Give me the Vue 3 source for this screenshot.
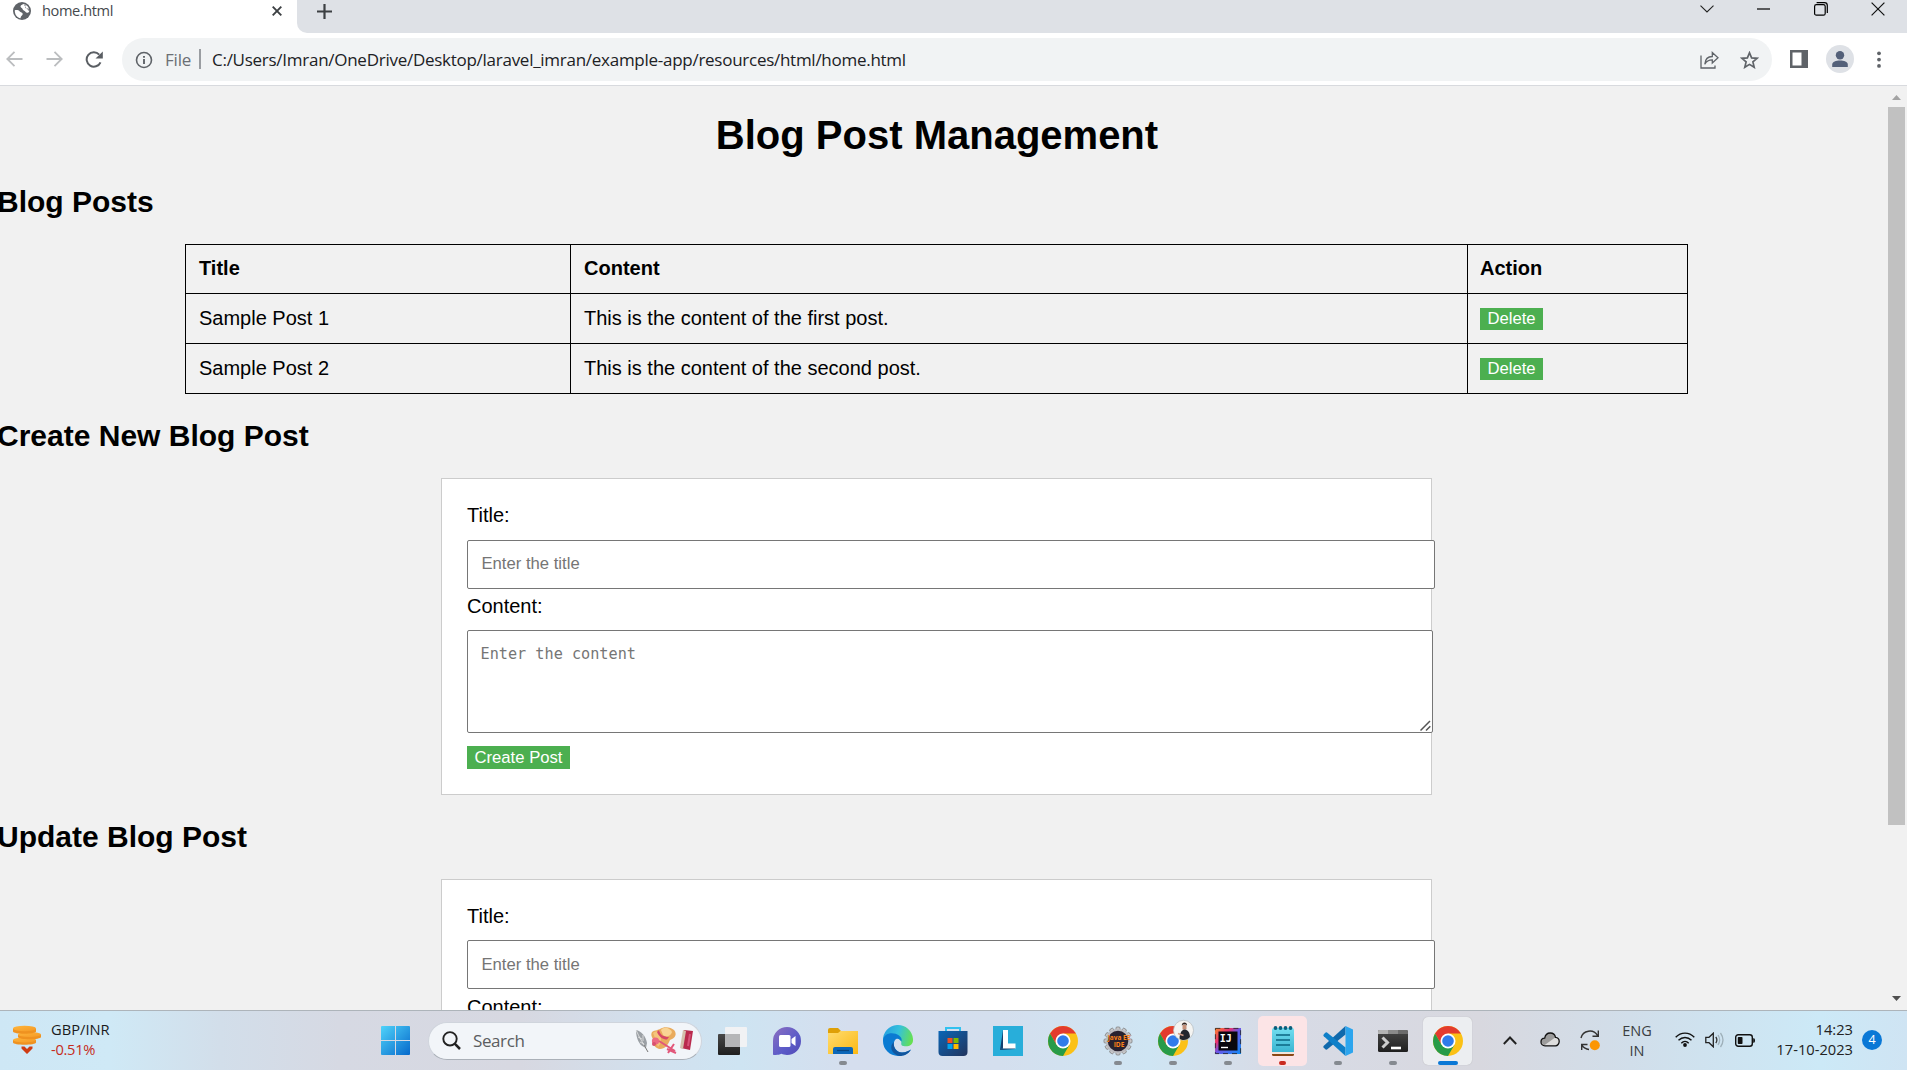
<script setup>
const posts = [
  { title: 'Sample Post 1', content: 'This is the content of the first post.' },
  { title: 'Sample Post 2', content: 'This is the content of the second post.' },
]
const forms = [
  { heading: 'Create New Blog Post', button: 'Create Post', cls: 'create' },
  { heading: 'Update Blog Post', button: 'Update Post', cls: 'update' },
]
const apps = [
  { id: 'taskview' },
  { id: 'chat' },
  { id: 'folder', run: true },
  { id: 'edge' },
  { id: 'store' },
  { id: 'lapp' },
  { id: 'chrome' },
  { id: 'eclipse', run: true },
  { id: 'chromeuser', run: true },
  { id: 'idea', run: true },
  { id: 'notepad', run: true, alert: true },
  { id: 'code', run: true },
  { id: 'terminal', run: true },
  { id: 'chromeactive', active: true },
]
const gearTeeth = Array.from({ length: 12 }, (_, i) => i * 30)
</script>

<template>
  <div class="screen">
    <div class="tabstrip">
      <div class="tab">
        <svg class="globe" width="18" height="18" viewBox="0 0 18 18">
          <circle cx="9" cy="9" r="9" fill="#5f6368" />
          <path d="M1.8 8.2C3.6 8 5.8 8 6.8 9.4 7.4 10.3 9.8 10.2 9.7 12 9.6 13.8 7.7 13.6 7.6 16.3 3.8 15.6 1.6 12.2 1.8 8.2Z" fill="#fff" />
          <path d="M10.2 2.1C8.6 3 7.2 3.8 7.6 5 8 6.1 9.3 5.6 9.5 7 9.7 8.3 11.8 8.7 12.4 9.8 13 11 15.6 11 16.2 9.4 16.4 5.4 13.6 2.4 10.2 2.1Z" fill="#fff" />
          <path d="M10.6 2.6C12.8 2.6 13.3 4 12.2 5 11.6 5.6 12.8 7 14.2 6.4 15.5 5.9 16.4 7 16.2 9.4" fill="#5f6368" opacity=".75" />
        </svg>
        <span class="tabtitle">home.html</span>
        <svg class="tabclose" width="10" height="10" viewBox="0 0 10 10"><path d="M.7.7 9.3 9.3M9.3.7.7 9.3" stroke="#3c4043" stroke-width="1.9" /></svg>
      </div>
      <div class="striprest">
        <svg class="plus" width="15" height="15" viewBox="0 0 15 15"><path d="M7.5 0V15M0 7.5H15" stroke="#3c4043" stroke-width="2.2" /></svg>
        <div class="winctl">
          <svg width="14" height="8" viewBox="0 0 14 8"><path d="M.5.7 7 7 13.500 .7" fill="none" stroke="#222" stroke-width="1.1" /></svg>
          <svg width="14" height="2" viewBox="0 0 14 2"><path d="M0 1H13" stroke="#000" stroke-width="1.2" /></svg>
          <svg width="14" height="14" viewBox="0 0 14 14"><rect x=".6" y="2.600" width="10.600" height="10.600" rx="1.800" fill="none" stroke="#000" stroke-width="1.200" /><path d="M2.600 .7H10.500Q13.300 .7 13.300 3.500V11" fill="none" stroke="#000" stroke-width="1.200" /></svg>
          <svg width="14" height="14" viewBox="0 0 14 14"><path d="M.6.6 13.400 13.400M13.400 .6.600 13.400" stroke="#111" stroke-width="1.200" /></svg>
        </div>
      </div>
    </div>

    <div class="toolbar">
      <svg class="back" width="17" height="16" viewBox="0 0 17 16"><path d="M16.500 8H1.500M8.500 .8 1.300 8 8.500 15.200" fill="none" stroke="#bbbdbf" stroke-width="1.800" /></svg>
      <svg class="fwd" width="17" height="16" viewBox="0 0 17 16"><path d="M.5 8H15.500M8.500 .8 15.700 8 8.500 15.200" fill="none" stroke="#bbbdbf" stroke-width="1.800" /></svg>
      <svg class="reload" width="18" height="17" viewBox="0 0 18 17"><path d="M15.500 11.300A7.200 7.200 0 1 1 14.200 3.600" fill="none" stroke="#5a5e63" stroke-width="2" /><path d="M17.800 .6V7.600H10.500Z" fill="#5a5e63" /></svg>
      <div class="omnibox">
        <svg class="info" width="18" height="18" viewBox="0 0 18 18"><circle cx="9" cy="9" r="7.500" fill="none" stroke="#5f6368" stroke-width="1.600" /><path d="M9 8V13M9 5V6.800" stroke="#5f6368" stroke-width="1.900" /></svg>
        <span class="scheme">File</span>
        <i class="sep"></i>
        <span class="url">C:/Users/Imran/OneDrive/Desktop/laravel_imran/example-app/resources/html/home.html</span>
        <svg class="share" width="19" height="18" viewBox="0 0 19 18"><path d="M1 4.500V17H15V14.500M4.800 13.200C5.200 8.500 8 5.500 12.300 5.500V1.500L18 6.800 12.300 12V8.900C8.500 8.900 6.300 10.200 4.800 13.200Z" fill="none" stroke="#5f6368" stroke-width="1.300" /></svg>
        <svg class="star" width="19" height="18" viewBox="0 0 19 18"><path d="M9.500 1.800 11.600 6.900 17.100 7.300 12.900 10.900 14.200 16.300 9.500 13.400 4.800 16.300 6.100 10.900 1.900 7.300 7.400 6.900Z" fill="none" stroke="#5f6368" stroke-width="1.700" /></svg>
      </div>
      <svg class="panel" width="18" height="18" viewBox="0 0 18 18"><path fill-rule="evenodd" d="M0 0H18V18H0ZM2.500 2.500V15.500H11.500V2.500Z" fill="#5f6368" /></svg>
      <svg class="person" width="28" height="28" viewBox="0 0 28 28"><circle cx="14" cy="14" r="14" fill="#dee1e6" /><circle cx="14" cy="10.200" r="4.200" fill="#536079" /><path d="M6.200 22V19.500C6.200 16.700 10 15.500 14 15.500S21.800 16.700 21.800 19.500V22Z" fill="#536079" /></svg>
      <svg class="dots" width="4" height="17" viewBox="0 0 4 17"><g fill="#5f6368"><circle cx="2" cy="2.300" r="1.900" /><circle cx="2" cy="8.600" r="1.900" /><circle cx="2" cy="14.900" r="1.900" /></g></svg>
    </div>

    <div class="viewport">
      <main class="page">
        <h1>Blog Post Management</h1>
        <h2>Blog Posts</h2>
        <table>
          <colgroup><col class="c1" /><col class="c2" /><col class="c3" /></colgroup>
          <thead>
            <tr><th>Title</th><th>Content</th><th>Action</th></tr>
          </thead>
          <tbody>
            <tr v-for="p in posts" :key="p.title">
              <td>{{ p.title }}</td>
              <td>{{ p.content }}</td>
              <td><button class="btn del">Delete</button></td>
            </tr>
          </tbody>
        </table>
        <template v-for="f in forms" :key="f.heading">
          <h2>{{ f.heading }}</h2>
          <form :class="f.cls" @submit.prevent>
            <label>Title:</label>
            <input type="text" placeholder="Enter the title" />
            <label>Content:</label>
            <div class="area">
              <textarea placeholder="Enter the content"></textarea>
              <svg class="grip" width="11" height="11" viewBox="0 0 11 11"><path d="M.5 10.500 10 1M6 10.500 10.300 6.200" stroke="#555" stroke-width="1.500" /></svg>
            </div>
            <button class="btn">{{ f.button }}</button>
          </form>
        </template>
      </main>
      <div class="scrollbar">
        <svg width="9" height="5" viewBox="0 0 9 5"><path d="M0 5 4.500 0 9 5Z" fill="#a3a3a3" /></svg>
        <div class="thumb"></div>
        <svg class="down" width="9" height="5" viewBox="0 0 9 5"><path d="M0 0H9L4.500 5Z" fill="#505050" /></svg>
      </div>
    </div>

    <div class="taskbar">
      <svg width="0" height="0" class="defs">
        <defs>
          <linearGradient id="gWin" x1="0" y1="0" x2="1" y2="1"><stop offset="0" stop-color="#4fd3fa" /><stop offset="1" stop-color="#0669cb" /></linearGradient>
          <linearGradient id="gCoin" x1="0" y1="0" x2="1" y2="1"><stop offset="0" stop-color="#ffb53b" /><stop offset="1" stop-color="#f49a26" /></linearGradient>
          <linearGradient id="gDark" x1="0" y1="0" x2="0" y2="1"><stop offset="0" stop-color="#484848" /><stop offset="1" stop-color="#1f1f1f" /></linearGradient>
          <linearGradient id="gChat" x1="0" y1="0" x2="1" y2="1"><stop offset="0" stop-color="#8d6fc0" /><stop offset=".6" stop-color="#5b5bc8" /><stop offset="1" stop-color="#5149b5" /></linearGradient>
          <linearGradient id="gFold" x1="0" y1="0" x2="1" y2="1"><stop offset="0" stop-color="#ffdc70" /><stop offset="1" stop-color="#fbb813" /></linearGradient>
          <linearGradient id="gEdge" x1="0" y1=".3" x2="1" y2=".5"><stop offset="0" stop-color="#259fe0" /><stop offset=".5" stop-color="#35c1dc" /><stop offset="1" stop-color="#66e052" /></linearGradient>
          <linearGradient id="gStore" x1="0" y1="0" x2="1" y2="1"><stop offset="0" stop-color="#0b66b6" /><stop offset="1" stop-color="#22345d" /></linearGradient>
          <linearGradient id="gIj" x1="0" y1="0" x2="1" y2="1"><stop offset="0" stop-color="#f98a2b" /><stop offset=".3" stop-color="#e8326e" /><stop offset=".5" stop-color="#6b57e8" /><stop offset="1" stop-color="#0d8cf5" /></linearGradient>
          <linearGradient id="gNote" x1="0" y1="0" x2="0" y2="1"><stop offset="0" stop-color="#72def0" /><stop offset="1" stop-color="#39b3d0" /></linearGradient>
          <symbol id="chromeLogo" viewBox="0 0 30 30">
            <circle cx="15" cy="15" r="15" fill="#fbc116" />
            <path d="M2.010 7.500A15 15 0 0 1 27.990 7.500H15L8.505 18.750Z" fill="#e33b2e" />
            <path d="M2.010 7.500A15 15 0 0 0 15 30L21.495 18.750H8.505Z" fill="#279b48" />
            <circle cx="15" cy="15" r="7.500" fill="#fff" />
            <circle cx="15" cy="15" r="5.800" fill="#2f7bea" />
          </symbol>
        </defs>
      </svg>

      <svg class="coins" width="29" height="30" viewBox="0 0 29 30">
        <path d="M0 15V17.500C0 20.500 23 20.500 23 17.500V15Z" fill="#ef9220" /><ellipse cx="11.500" cy="15" rx="11.500" ry="2.500" fill="url(#gCoin)" />
        <path d="M5 9.500V12C5 15 28 15 28 12V9.500Z" fill="#ef9220" /><ellipse cx="16.500" cy="9.500" rx="11.500" ry="2.500" fill="url(#gCoin)" />
        <path d="M0 3.500V6.500C0 9.500 23 9.500 23 6.500V3.500Z" fill="#ef9220" /><ellipse cx="11.500" cy="3.500" rx="11.500" ry="2.700" fill="url(#gCoin)" />
        <path d="M8.500 21.500H11.500L14 24 16.500 21.500H19.500V23.500L14 29 8.500 23.500Z" fill="#cf3b12" />
      </svg>
      <div class="rate"><span>GBP/INR</span><span class="neg">-0.51%</span></div>

      <svg class="winlogo" width="29" height="29" viewBox="0 0 29 29"><path d="M1 0H14V14H0V1Q0 0 1 0ZM15 0H28Q29 0 29 1V14H15ZM0 15H14V29H1Q0 29 0 28ZM15 15H29V28Q29 29 28 29H15Z" fill="url(#gWin)" /></svg>

      <div class="search">
        <svg class="mag" width="19" height="19" viewBox="0 0 19 19"><circle cx="8" cy="7.800" r="6.700" fill="none" stroke="#222" stroke-width="1.900" /><path d="M12.700 12.700 18 18" stroke="#222" stroke-width="2.500" /></svg>
        <span>Search</span>
        <svg class="art" width="60" height="28" viewBox="0 0 60 28">
          <path d="M1 3C6 4 11 9 12 16L11 21 9 20C4 18 1 11 1 3Z" fill="#9ba0a5" /><path d="M1 3C4 10 8 16 13 25M3 10 7 12M5 15 9 17M8 8 8 14" fill="none" stroke="#e8e8e8" stroke-width=".8" /><path d="M9 18 13 25" stroke="#777" />
          <path d="M17 5C20 3 24 3 25 2 29 -1 36 0 39 3 43 8 39 12 35 13 33 18 30 22 25 22 20 21 17 17 18 12 16 9 16 7 17 5Z" fill="#e9ab5d" /><path d="M26 3C29 -1 35 1 37 5 36 9 31 11 28 8Z" fill="#f9d494" /><path d="M18 6C21 4 24 4 25 7 27 12 26 17 23 20 21 16 20 10 18 6Z" fill="#f4c47c" /><path d="M24 3C25 8 29 10 34 10L32 12.500C28 12.500 24 10 22 5Z" fill="#d64766" />
          <circle cx="20.500" cy="14" r="3.600" fill="#ec6a84" /><circle cx="19" cy="17" r="2" fill="#d8506e" /><path d="M24 14 40 24M39 17 33 26M32 22 41 26" fill="none" stroke="#e2577a" stroke-width="2" />
          <path d="M49 3 58 4 55 23 46 21Z" fill="#b92a4d" /><path d="M48 3 51 4 48 22 45 21Z" fill="#d4c0ac" /><path d="M55 7 53 19" stroke="#d8537a" stroke-width="2" />
        </svg>
      </div>

      <div class="apps">
        <div v-for="a in apps" :key="a.id" class="slot" :class="{ active: a.active, alert: a.alert }">
          <svg width="50" height="50" viewBox="0 0 50 50">
            <g v-if="a.id === 'taskview'"><rect x="10" y="18" width="22" height="21" rx="1" fill="url(#gDark)" /><rect x="17" y="11" width="22" height="20" rx="1" fill="#f1f2f4" /><path d="M17 18H32V31H17Z" fill="#b5b6b8" /></g>
            <g v-else-if="a.id === 'chat'" transform="translate(-1 0)"><path d="M11 38.800V25A14 14 0 1 1 25 39C22.500 39 21 38.500 19.500 37.800 17 39 14 39.200 11 38.800Z" fill="url(#gChat)" /><rect x="17" y="19" width="11.500" height="12" rx="1.500" fill="#fff" /><path d="M29.500 23 33.500 20V30L29.500 27Z" fill="#fff" /></g>
            <g v-else-if="a.id === 'folder'"><path d="M10 14Q10 12 12 12H20L23 15V22H10Z" fill="#dfa007" /><path d="M10 17H20L22.500 15H40V38H10Z" fill="url(#gFold)" /><path d="M15 38V33Q15 31 17 31H33Q35 31 35 33V38Z" fill="#0c67b9" /><path d="M19 34.500H31" stroke="#09457f" stroke-width="1.200" /></g>
            <g v-else-if="a.id === 'edge'"><path d="M10 25A15 15 0 0 1 40 23C40.500 29 36 30.500 32 30.200 27 30 28.500 27.500 28.300 25.500L20 18Z" fill="url(#gEdge)" /><path d="M10 25C10 17 20 15 26 19.500 29 22 29 24 28.300 25.500 27.500 23 24 21.500 22 24 18.500 29 23 36.500 29 36.500 33 36.500 36 34.500 38 33.500 35.500 38 30.500 40 25 40A15 15 0 0 1 10 25Z" fill="#0b7bd2" /><path d="M20.800 26C20 32 24 37 29.500 36.500 33 36.400 36 34.500 38 33.500 35.500 38 31 40 26.500 40 18 38 16 30 20.800 26Z" fill="#12559d" /></g>
            <g v-else-if="a.id === 'store'"><path d="M18 17V12H32V17" fill="none" stroke="#32c1ef" stroke-width="2" /><path d="M10.500 15H39.500V36Q39.500 40 35.500 40H14.500Q10.500 40 10.500 36Z" fill="url(#gStore)" /><path d="M19.500 22H24.500V27H19.500Z" fill="#f25022" /><path d="M25.500 22H30.500V27H25.500Z" fill="#7fba00" /><path d="M19.500 28H24.500V33H19.500Z" fill="#00a4ef" /><path d="M25.500 28H30.500V33H25.500Z" fill="#ffb900" /></g>
            <g v-else-if="a.id === 'lapp'"><path d="M10 10H40V40H10Z" fill="#28aeda" /><path d="M20 14 17 34 20 32Z M17 34 20 31.500H32V33Z" fill="#15406f" /><path d="M20 14H25V27.500H32.500V32.500H20Z" fill="#fff" /></g>
            <g v-else-if="a.id === 'chrome' || a.id === 'chromeactive'"><use href="#chromeLogo" x="10" y="10" width="30" height="30" /></g>
            <g v-else-if="a.id === 'eclipse'"><rect v-for="t in gearTeeth" :key="t" x="23" y="11" width="4" height="5" rx="1" fill="#c9c9cb" stroke="#777" stroke-width=".7" :transform="`rotate(${t} 25 25)`" /><circle cx="25" cy="25" r="11.300" fill="#29222f" stroke="#bcbcc0" stroke-width="2" /><text x="26" y="24" class="eclText">Java EE</text><text x="26" y="30.500" class="eclText">IDE</text></g>
            <g v-else-if="a.id === 'chromeuser'"><use href="#chromeLogo" x="10" y="10" width="30" height="30" /><circle cx="35.500" cy="14.300" r="10" fill="#f4f4f2" stroke="#b5babd" stroke-width=".7" /><path d="M34.500 9H38.500V13.500H34.500Z" fill="#c59078" /><path d="M33.800 9.500C33.500 5.500 39.500 5.500 39 9.500L38 8.500H35Z" fill="#33241f" /><path d="M31.500 22.500C31.800 18 33 14.500 36 13.500 39.500 13.500 41.500 15.500 42 21 39 24.500 34.500 25 31.500 22.500Z" fill="#23262d" /><path d="M30 17.500 35.500 19.500" stroke="#d19b85" stroke-width="1.500" /></g>
            <g v-else-if="a.id === 'idea'"><path d="M12 12H38V38H12Z" fill="url(#gIj)" /><path d="M12.400 12.400H37.600V37.600H12.400Z" fill="none" stroke="#222" stroke-width=".8" stroke-dasharray="5 4" /><path d="M15.500 15.500H34.500V34.500H15.500Z" fill="#09070e" /><text x="16.800" y="25.500" class="ijText">IJ</text><path d="M18 31.500H25" stroke="#fff" stroke-width="1.400" /></g>
            <g v-else-if="a.id === 'notepad'"><path d="M14 34H36V38.500Q36 40 34.500 40H15.500Q14 40 14 38.500Z" fill="#8a4714" /><path d="M14 14Q14 12 16 12H34Q36 12 36 14V37H14Z" fill="url(#gNote)" /><path d="M14 36H36V38H14Z" fill="#f2e4dc" /><path d="M18 19H32M18 24H32M18 29H32" stroke="#0b6682" stroke-width="1.700" /><g fill="#0b5f7c"><circle cx="17.500" cy="12" r="1.900" /><circle cx="22.500" cy="12" r="1.900" /><circle cx="27.500" cy="12" r="1.900" /><circle cx="32.500" cy="12" r="1.900" /></g></g>
            <g v-else-if="a.id === 'code'"><path d="M32.500 10V18.500L14 33.500Q13 34 12 33L10.500 31.300Q10 30.500 10.800 29.700Z" fill="#1069ac" /><path d="M32.500 40V31.500L14 16.500Q13 16 12 17L10.500 18.700Q10 19.500 10.800 20.300Z" fill="#0f7fc8" /><path d="M32.500 10 40 13.500V36.500L32.500 40Z" fill="#2ca5ee" /></g>
            <g v-else-if="a.id === 'terminal'"><rect x="10" y="14" width="30" height="22" rx="1.500" fill="url(#gDark)" /><path d="M10 18V15.500Q10 14 11.500 14H20V18Z" fill="#b3b3b3" /><path d="M20 14H30V18H20Z" fill="#8a8a8a" /><path d="M30 14H38.500Q40 14 40 15.500V18H30Z" fill="#6b6b6b" /><path d="M14.500 21.500 19.500 26.500 14.500 31.500" fill="none" stroke="#ccc" stroke-width="3" /><path d="M23 32H33" stroke="#fff" stroke-width="2.600" /></g>
          </svg>
          <i v-if="a.run || a.active" class="ind"></i>
        </div>
      </div>

      <div class="tray">
        <svg class="chev" width="14" height="9" viewBox="0 0 14 9"><path d="M.8 8 7 1.500 13.200 8" fill="none" stroke="#222" stroke-width="1.900" /></svg>
        <svg class="cloud" width="20" height="15" viewBox="0 0 20 15"><path d="M5 13.800C2.500 13.800 1 12 1 10S2.500 6.300 4.700 6.200C5.200 3 7.500 1 10.300 1 13 1 15 2.800 15.500 5.300 17.800 5.500 19.200 7.300 19.200 9.500S17.500 13.800 15.500 13.800Z" fill="#dedede" /><path d="M1 10C1 7.500 3 6 4.700 6.200 5.200 3 7.500 1 10.300 1 13 1 15 2.800 15.500 5.300L4 13.500Z" fill="#9c9c9c" /><path d="M5 13.800C2.500 13.800 1 12 1 10S2.500 6.300 4.700 6.200C5.200 3 7.500 1 10.300 1 13 1 15 2.800 15.500 5.300 17.800 5.500 19.200 7.300 19.200 9.500S17.500 13.800 15.500 13.800Z" fill="none" stroke="#111" stroke-width="1.300" /></svg>
        <svg class="sync" width="20" height="21" viewBox="0 0 20 21"><path d="M1 8A9 9 0 0 1 17.500 5.500M18.300 .5V6.300H12.500M9 19.500C6 19.300 3.500 17.600 2 15.200M1.700 20V14.500H7.500" fill="none" stroke="#333" stroke-width="1.400" /><circle cx="14.800" cy="15.300" r="5" fill="#fb9604" /></svg>
        <div class="lang"><span>ENG</span><span>IN</span></div>
        <svg class="wifi" width="20" height="15" viewBox="0 0 20 15"><path d="M.7 5.300C6 -.3 14 -.3 19.300 5.300M3.500 8.300C7.300 4.500 12.700 4.500 16.500 8.300M6.300 11.200C8.500 9 11.500 9 13.700 11.200" fill="none" stroke="#111" stroke-width="1.400" /><circle cx="10" cy="13" r="1.900" fill="#111" /></svg>
        <svg class="vol" width="20" height="16" viewBox="0 0 20 16"><path d="M.8 5.300H4L8.300 1.200V14.800L4 10.700H.8Z" fill="none" stroke="#222" stroke-width="1.300" /><path d="M10.800 5Q13 8 10.800 11" fill="none" stroke="#333" stroke-width="1.300" /><path d="M13 3Q16.300 8 13 13M15.500 1Q20.500 8 15.500 15" fill="none" stroke="#9fb0ba" stroke-width="1.300" /></svg>
        <svg class="bat" width="20" height="13" viewBox="0 0 20 13"><rect x=".7" y=".8" width="16.600" height="11.400" rx="2.500" fill="none" stroke="#111" stroke-width="1.400" /><rect x="2.800" y="2.900" width="4.700" height="7.200" rx=".8" fill="#111" /><path d="M18.200 4.300H18.800Q20 4.300 20 6.500T18.800 8.700H18.200Z" fill="#111" /></svg>
        <div class="clock"><span class="time">14:23</span><span class="date">17-10-2023</span></div>
        <div class="badge">4</div>
      </div>
    </div>
  </div>
</template>

<style>
html, body { margin: 0; overflow: hidden; }
</style>

<style scoped>
.screen { width: 1907px; height: 1070px; display: flex; flex-direction: column; overflow: hidden; background: #f1f1f1; font-family: "Liberation Sans", Arial, sans-serif; color: #000; }
svg { display: block; flex: none; }
.tabstrip { flex: none; height: 33px; display: flex; background: #fff; }
.tab { width: 297px; height: 22px; display: flex; align-items: center; flex: none; }
.globe { margin-left: 13px; }
.tabtitle { margin: -2px 0 0 11px; width: 72px; white-space: nowrap; font: 14.600px/22px "Open Sans", sans-serif; color: #45494d; letter-spacing: -.4px; }
.tabclose { margin-left: 158px; }
.striprest { flex: 1; background: #dee1e6; border-bottom-left-radius: 10px; display: flex; }
.plus { margin: 4px 0 0 20px; }
.winctl { margin-left: auto; display: flex; align-items: center; height: 17px; gap: 43px; padding-right: 22px; }
.toolbar { flex: none; height: 52px; background: #fff; border-bottom: 1px solid #d8dade; display: flex; align-items: center; }
.back { margin-left: 6px; }
.fwd { margin-left: 23px; }
.reload { margin-left: 22px; }
.omnibox { margin-left: 19px; width: 1650px; height: 43px; border-radius: 22px; background: #f1f3f4; display: flex; align-items: center; margin-top: 1px; flex: none; }
.info { margin-left: 13px; }
.scheme { margin-left: 12px; width: 34px; font: 17px/24px "Open Sans", sans-serif; color: #6b6f74; letter-spacing: -.2px; white-space: nowrap; }
.sep { width: 2px; height: 20px; background: #9a9da1; margin-bottom: 2px; }
.url { margin-left: 11px; width: 1400px; font: 17px/24px "Open Sans", sans-serif; color: #202124; white-space: nowrap; letter-spacing: -.268px; }
.share { margin-left: 88px; }
.star { margin-left: 21px; }
.panel { margin-left: 18px; }
.person { margin-left: 18px; }
.dots { margin-left: 23px; }

.viewport { flex: none; height: 924px; display: flex; overflow: hidden; }
.page { width: 1879px; margin-left: -3px; margin-right: 12px; flex: none; }
h1 { margin: 26px 0; padding-left: 1px; font-size: 40px; line-height: 46px; text-align: center; }
h2 { margin: 25px 0; font-size: 30px; line-height: 34px; }
h1 + h2 { margin-top: 27px; }
table { width: 1503px; margin: 0 auto; border-collapse: collapse; table-layout: fixed; font-size: 20px; line-height: 24px; }
.c1 { width: 385px; }
.c2 { width: 897px; }
th, td { border: 1px solid #000; padding: 0 13px 2px; text-align: left; height: 47px; }
th { padding-bottom: 3px; height: 45px; }
th:last-child, td:last-child { padding-left: 12px; }
.btn { display: block; border: 0; padding: 0 7px; width: 103px; height: 23px; background: #4caf50; color: #fff; font: 16.667px/21px "Liberation Sans", Arial, sans-serif; white-space: nowrap; }
.del { height: 22px; width: 63px; margin-top: 2px; }
form { width: 939px; height: 265px; margin: 0 auto; padding: 25px; border: 1px solid #ccc; background: #fff; }
label { display: block; font-size: 20px; line-height: 23px; }
input { display: block; box-sizing: border-box; width: 968px; height: 49px; margin: 13px 0 6px; padding: 0 13.500px 2px; border: 1px solid #767676; border-radius: 2px; background: #fff; font: 16.667px "Liberation Sans", Arial, sans-serif; }
.update input { margin: 12px 0 7px; padding-bottom: 0; }
.area { position: relative; width: 966px; margin: 12px 0 13px; }
textarea { display: block; box-sizing: border-box; width: 966px; height: 103px; padding: 13px 12.500px; border: 1px solid #767676; border-radius: 2px; resize: none; background: #fff; font: 15.200px/20px "DejaVu Sans Mono", monospace; }
input::placeholder, textarea::placeholder { color: #757575; opacity: 1; }
.grip { position: absolute; right: 2px; bottom: 2px; }
.scrollbar { width: 17px; margin-right: 2px; display: flex; flex-direction: column; align-items: center; padding-top: 9px; }
.thumb { width: 17px; height: 718px; margin-top: 7px; background: #c1c1c1; }
.down { margin-top: 171px; }

.taskbar { position: relative; flex: none; box-sizing: border-box; height: 60px; border-top: 1px solid #adb4ba; display: flex; align-items: center; background: linear-gradient(90deg, #cee7f5 0, #cfe9f6 110px, #d2deea 220px, #d6d9e3 340px, #d7d8e1 520px, #d1e1ef 670px, #cee4f2 740px, #d5deee 850px, #d4dfee 1000px, #cfe5f3 1150px, #d7dbe6 1270px, #d8d8df 1480px, #d1deea 1630px, #cce9f7 1820px, #cfe4f3 1907px); font-family: "Open Sans", sans-serif; }
.defs { position: absolute; }
.coins { margin-left: 13px; margin-top: -2px; }
.rate { margin-left: 9px; width: 70px; display: flex; flex-direction: column; font-size: 14.700px; line-height: 20px; letter-spacing: 0; color: #1b1b1b; margin-bottom: 3px; }
.neg { color: #c62b20; letter-spacing: -.3px; }
.winlogo { margin-left: 260px; }
.search { margin-left: 18px; width: 274px; height: 38px; box-sizing: border-box; border-radius: 19px; background: #f2f5f9; border: 1px solid #cfd4dc; border-bottom-color: #aab0b8; display: flex; align-items: center; flex: none; }
.mag { margin-left: 13px; }
.search span { margin-left: 12px; width: 60px; font-size: 17px; letter-spacing: -.4px; color: #5b5d60; }
.art { margin-left: 102px; }
.apps { display: flex; margin-left: 3px; height: 59px; align-items: center; flex: none; }
.slot { position: relative; width: 55px; height: 50px; display: flex; justify-content: center; border-radius: 5px; }
.slot::before { content: ""; position: absolute; inset: 0 3px; border-radius: 5px; }
.slot svg { position: relative; }
.alert::before { background: #fce4e6; }
.active::before { background: #eceef1; box-shadow: 0 0 1px #aaa; top: 1px; bottom: 1px; }
.ind { position: absolute; left: 24px; bottom: 1px; width: 8px; height: 4px; border-radius: 2px; background: #858a90; }
.alert .ind { background: #c92b20; width: 7px; }
.active .ind { left: 18px; width: 20px; background: #0a78d6; }
.eclText { font: bold 6.500px "Open Sans", sans-serif; fill: #ff8418; text-anchor: middle; }
.ijText { font: bold 10px "DejaVu Sans Mono", monospace; fill: #fff; }
.tray { margin-left: 28px; display: flex; align-items: center; flex: none; color: #222; }
.cloud { margin-left: 23px; margin-top: -2px; }
.sync { margin-left: 20px; }
.lang { margin-left: 20px; width: 34px; display: flex; flex-direction: column; text-align: center; font-size: 14.500px; line-height: 20px; color: #3a3e42; white-space: nowrap; }
.wifi { margin-left: 21px; margin-top: -2px; }
.vol { margin-left: 10px; margin-top: -1px; }
.bat { margin-left: 10px; margin-top: -1px; }
.clock { margin-left: 17px; width: 81px; display: flex; flex-direction: column; align-items: flex-end; font-size: 14.700px; line-height: 20px; white-space: nowrap; margin-bottom: 4px; }
.badge { margin-left: 9px; width: 20px; height: 20px; border-radius: 50%; background: #0a78d6; color: #fff; font-size: 12.500px; line-height: 20px; text-align: center; margin-top: -2px; }
</style>
